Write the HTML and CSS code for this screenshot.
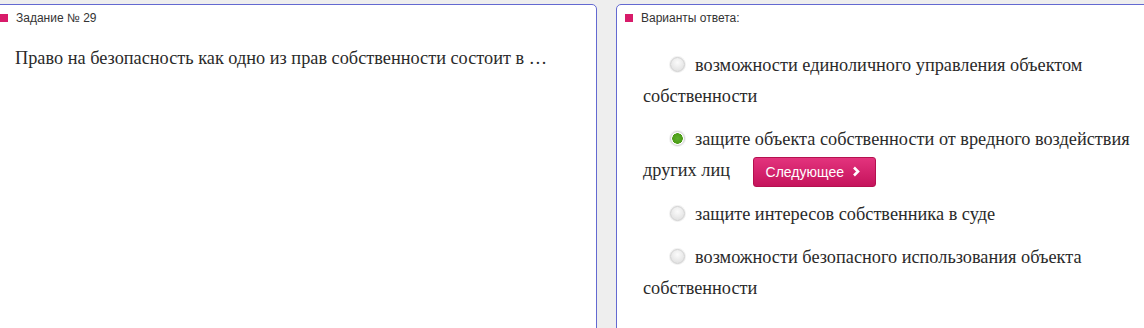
FILE: index.html
```html
<!DOCTYPE html>
<html lang="ru">
<head>
<meta charset="utf-8">
<link rel="stylesheet" href="styles.css">
</head>
<body>
<div class="page">
  <section class="panel panel-left">
    <div class="title"><span class="mark"></span><span class="title-text">Задание № 29</span></div>
    <p class="question">Право на безопасность как одно из прав собственности состоит в …</p>
  </section>
  <section class="panel panel-right">
    <div class="title"><span class="mark"></span><span class="title-text">Варианты ответа:</span></div>
    <div class="answers">
      <p class="answer"><span class="radio"></span>возможности единоличного управления объектом собственности</p>
      <p class="answer"><span class="radio checked"></span>защите объекта собственности от вредного воздействия других лиц <button class="next">Следующее <svg class="chev" width="9" height="11" viewBox="0 0 9 11"><path d="M2 1.5 L6 5.5 L2 9.5" fill="none" stroke="#fff" stroke-width="2.6"/></svg></button></p>
      <p class="answer"><span class="radio"></span>защите интересов собственника в суде</p>
      <p class="answer"><span class="radio"></span>возможности безопасного использования объекта собственности</p>
    </div>
  </section>
</div>
</body>
</html>
```

FILE: styles.css
```css
* { box-sizing: border-box; }
html, body { margin: 0; padding: 0; }
body {
  background: #eeeeee;
  overflow: hidden;
  height: 328px;
}
.page {
  display: flex;
  gap: 19px;
  padding-top: 4px;
  margin-left: -9px;
}
.panel {
  background: #fff;
  border: 1px solid #6369d1;
  border-radius: 5px;
  height: 360px;
  flex: none;
}
.panel-left { width: 606px; padding: 2px 8px; }
.panel-right { width: 570px; padding: 2px 8px; }
.title {
  display: flex;
  align-items: center;
  gap: 8px;
  height: 22px;
  font-family: "Liberation Sans", Arial, sans-serif;
  font-size: 12px;
  color: #333;
}
.mark {
  width: 8px;
  height: 8px;
  background: #d81b6a;
  flex: none;
}
.question {
  margin: 18px 0 0;
  padding: 0 15px;
  font-family: "Liberation Serif", "Times New Roman", serif;
  font-size: 18.3px;
  line-height: 22px;
  color: #2a2a2a;
}
.answers {
  margin-top: 21px;
  padding: 0 18px;
  font-family: "Liberation Serif", "Times New Roman", serif;
  font-size: 18.3px;
  color: #2a2a2a;
}
.answer {
  margin: 0 0 12px;
  line-height: 31px;
  text-indent: 27px;
}
.radio {
  display: inline-block;
  width: 15px;
  height: 15px;
  border-radius: 50%;
  border: 1px solid #d0d0d0;
  background: radial-gradient(circle at 50% 35%, #fbfbfb 0, #e8e8e8 60%, #dcdcdc 100%);
  box-shadow: 0 0 0 1px #f1f1f1;
  vertical-align: -1px;
  margin-right: 10px;
  text-indent: 0;
}
.radio.checked {
  background: radial-gradient(circle at 50% 50%, #5cb02a 0, #4c9c17 5px, #fff 5.5px, #fff 7px);
  border-color: #d0d0d0;
}
.next {
  display: inline-flex;
  align-items: center;
  gap: 8px;
  height: 30px;
  padding: 0 14px 0 12px;
  margin-left: 18px;
  vertical-align: middle;
  border: 1px solid #b5104f;
  border-radius: 3px;
  background: linear-gradient(#e3337d, #c5145c);
  color: #fff;
  font-family: "Liberation Sans", Arial, sans-serif;
  font-size: 14px;
  text-indent: 0;
  line-height: 1;
  cursor: pointer;
}
.chev { display: block; }
```
